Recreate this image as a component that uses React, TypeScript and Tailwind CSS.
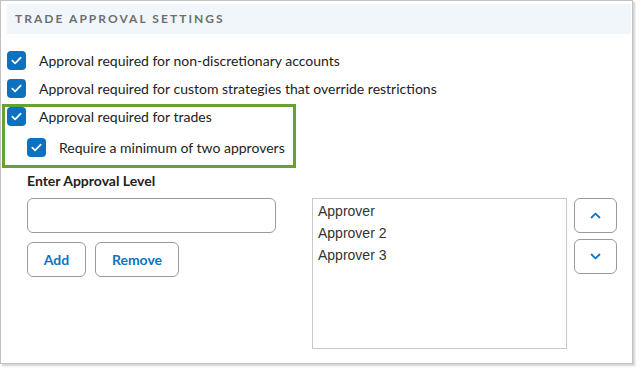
import React from 'react';

function Box(props: { className?: string }) {
  return (
    <span className={`flex h-[19px] w-[19px] shrink-0 items-center justify-center rounded-[4px] bg-[#0a72c1] ${props.className ?? ''}`}>
      <svg width="11" height="9" viewBox="0 0 11 9" fill="none">
        <path d="M1.3 4.6 4.1 7.3 9.7 1.6" stroke="white" strokeWidth="1.7" strokeLinecap="round" strokeLinejoin="round" />
      </svg>
    </span>
  );
}

function Row(props: { label: string; className?: string; gap?: string }) {
  return (
    <div className={`flex items-center ${props.className ?? ''}`}>
      <Box />
      <span className={`${props.gap ?? 'ml-[13px]'} text-[14px] leading-none text-[#222]`}>{props.label}</span>
    </div>
  );
}

export default function App() {
  const approvers = ['Approver', 'Approver 2', 'Approver 3'];

  return (
    <div className="h-[373px] w-[642px] bg-white font-['Lato','Liberation_Sans',sans-serif]">
      <div className="h-[364px] w-[633px] border border-[#c2c2c2] bg-white pl-[6px] pr-[1px] pt-[3px] shadow-[2px_2px_2px_rgba(0,0,0,0.18)]">
        <div className="flex h-[30px] items-center bg-[#f1f6fa] pl-[8px] text-[12px] font-bold uppercase tracking-[0.17em] text-[#6e6e6e]">
          Trade Approval Settings
        </div>

        <div className="mt-[17px] flex flex-col">
          <Row label="Approval required for non-discretionary accounts" />
          <Row className="mt-[9px]" label="Approval required for custom strategies that override restrictions" />
          <div className="ml-[-5px] mt-[6px] h-[64px] w-[294px] border-[3px] border-[#68a133] pl-[2px]">
            <Row label="Approval required for trades" gap="ml-[13px]" />
            <div className="ml-[20px] mt-[12px] flex items-center">
              <Box />
              <span className="ml-[13px] text-[14px] leading-none text-[#222]">Require a minimum of two approvers</span>
            </div>
          </div>
        </div>

        <div className="ml-[20px] mt-[4px] flex">
          <div className="flex w-[249px] flex-col">
            <div className="text-[14px] font-bold leading-[18px] text-[#222]">Enter Approval Level</div>
            <input className="mt-[8px] h-[35px] w-[249px] rounded-[6px] border border-[#9a9a9a] px-2 text-[14px] outline-none" />
            <div className="mt-[9px] flex gap-[9px]">
              <button className="h-[35px] w-[59px] rounded-[6px] border border-[#9a9a9a] bg-white text-[14px] font-bold text-[#0b74c4]">
                Add
              </button>
              <button className="h-[35px] w-[84px] rounded-[6px] border border-[#9a9a9a] bg-white text-[14px] font-bold text-[#0b74c4]">
                Remove
              </button>
            </div>
          </div>

          <div className="ml-[36px] mt-[26px] h-[151px] w-[255px] border border-[#c8c8c8] pl-[5px] pt-[1px] font-['Liberation_Sans',Arial,sans-serif] text-[14px] leading-[22px] text-[#333]">
            {approvers.map((a) => (
              <div key={a}>{a}</div>
            ))}
          </div>

          <div className="ml-[7px] mt-[26px] flex flex-col gap-[6px]">
            <button className="flex h-[35px] w-[43px] items-center justify-center rounded-[6px] border border-[#9a9a9a] bg-white">
              <svg width="11" height="7" viewBox="0 0 11 7" fill="none">
                <path d="M1.5 5.5 5.5 1.7 9.5 5.5" stroke="#0b74c4" strokeWidth="1.8" strokeLinecap="round" strokeLinejoin="round" />
              </svg>
            </button>
            <button className="flex h-[35px] w-[43px] items-center justify-center rounded-[6px] border border-[#9a9a9a] bg-white">
              <svg width="11" height="7" viewBox="0 0 11 7" fill="none">
                <path d="M1.5 1.5 5.5 5.3 9.5 1.5" stroke="#0b74c4" strokeWidth="1.8" strokeLinecap="round" strokeLinejoin="round" />
              </svg>
            </button>
          </div>
        </div>
      </div>
    </div>
  );
}
